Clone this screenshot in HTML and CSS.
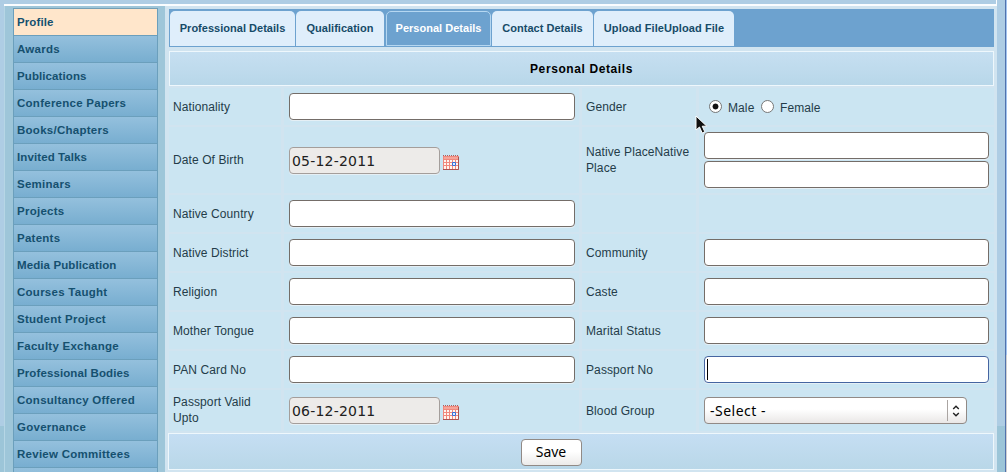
FILE: index.html
```
<!DOCTYPE html>
<html lang="en">
<head>
<meta charset="utf-8">
<title>Personal Details</title>
<link rel="stylesheet" href="styles.css">
</head>
<body>
<div class="page">
  <div class="topline"></div>
  <div class="layout">
    <nav class="sidebar">
      <a class="item tight current">Profile</a>
      <a class="item">Awards</a>
      <a class="item tight">Publications</a>
      <a class="item">Conference Papers</a>
      <a class="item">Books/Chapters</a>
      <a class="item tight">Invited Talks</a>
      <a class="item">Seminars</a>
      <a class="item">Projects</a>
      <a class="item">Patents</a>
      <a class="item tight">Media Publication</a>
      <a class="item">Courses Taught</a>
      <a class="item">Student Project</a>
      <a class="item">Faculty Exchange</a>
      <a class="item tight">Professional Bodies</a>
      <a class="item">Consultancy Offered</a>
      <a class="item">Governance</a>
      <a class="item">Review Committees</a>
      <a class="item"></a>
    </nav>
    <main class="content">
      <div class="tabs">
        <a class="tab tab-professional">Professional Details</a>
        <a class="tab tab-qualification">Qualification</a>
        <a class="tab tab-personal active">Personal Details</a>
        <a class="tab tab-contact">Contact Details</a>
        <a class="tab tab-upload">Upload FileUpload File</a>
      </div>
      <h1 class="title">Personal Details</h1>
      <form class="fields">
        <label class="cell label">Nationality</label>
        <div class="cell"><div class="field"></div></div>
        <label class="cell label">Gender</label>
        <div class="cell gender"><span class="radio checked"></span><span class="male">Male</span><span class="radio"></span><span class="female">Female</span></div>

        <label class="cell label">Date Of Birth</label>
        <div class="cell"><div class="field date">05-12-2011</div>
          <svg class="calendar" viewBox="0 0 16 16"><use href="#cal"/></svg></div>
        <label class="cell label"><span>Native PlaceNative<br>Place</span></label>
        <div class="cell stack"><div class="field narrow"></div><div class="field narrow"></div></div>

        <label class="cell label">Native Country</label>
        <div class="cell"><div class="field"></div></div>
        <div class="cell"></div>
        <div class="cell"></div>

        <label class="cell label">Native District</label>
        <div class="cell"><div class="field"></div></div>
        <label class="cell label">Community</label>
        <div class="cell"><div class="field narrow"></div></div>

        <label class="cell label">Religion</label>
        <div class="cell"><div class="field"></div></div>
        <label class="cell label">Caste</label>
        <div class="cell"><div class="field narrow"></div></div>

        <label class="cell label">Mother Tongue</label>
        <div class="cell"><div class="field"></div></div>
        <label class="cell label">Marital Status</label>
        <div class="cell"><div class="field narrow"></div></div>

        <label class="cell label">PAN Card No</label>
        <div class="cell"><div class="field"></div></div>
        <label class="cell label">Passport No</label>
        <div class="cell"><div class="field narrow focused"><span class="caret"></span></div></div>

        <label class="cell label upto"><span>Passport Valid<br>Upto</span></label>
        <div class="cell"><div class="field date">06-12-2011</div>
          <svg class="calendar" viewBox="0 0 16 16"><use href="#cal"/></svg></div>
        <label class="cell label">Blood Group</label>
        <div class="cell"><div class="select"><span class="value">-Select -</span><span class="arrows"><svg width="8" height="12" viewBox="0 0 8 12"><path d="M1.2 4L4 1.2 6.800 4M1.200 8L4 10.800 6.800 8" fill="none" stroke="#222" stroke-width="1.400"/></svg></span></div></div>
      </form>
      <div class="actions"><div class="save">Save</div></div>
    </main>
    <div class="gutter"></div>
    <div class="scrollbar"></div>
  </div>
</div>
<svg class="pointer" viewBox="0 0 13 20"><path d="M1 1v14l3.500-3 2.700 6 2.600-1.200-2.600-5.600h4.600z" fill="#111" stroke="#fff"/></svg>
<svg class="defs">
  <symbol id="cal" viewBox="0 0 16 16">
    <path d="M0 2h16v14H0z" fill="#f0887d"/>
    <path d="M0 1.500h16" stroke="#aa6260" stroke-width="1" stroke-dasharray="1 1"/>
    <path d="M1 3h14v2H1z" fill="#f5a59a"/>
    <path d="M1 6h2v2H1zM4 6h2v2H4zM7 6h2v2H7zM10 6h2v2h-2zM13 6h2v2h-2zM1 9h2v2H1zM4 9h2v2H4zM7 9h2v2H7zM10 9h2v2h-2zM13 9h2v2h-2zM1 12h2v3H1zM4 12h2v3H4zM7 12h2v3H7zM10 12h2v3h-2zM13 12h2v3h-2z" fill="#fff5ef"/>
    <path d="M9.500 8.500h3v3h-3z" fill="#dcecff" stroke="#356ed8"/>
    <path d="M15.500 3v12.500H0" fill="none" stroke="#ab5250"/>
  </symbol>
</svg>
</body>
</html>
```

FILE: styles.css
```
* { box-sizing: border-box; }

body {
  margin: 0;
  width: 1007px;
  height: 472px;
  overflow: hidden;
  font-family: "Liberation Sans", Arial, sans-serif;
  font-size: 12px;
  background: linear-gradient(#aecde4 426px, #9cc5d8 426px);
}

.page { height: 472px; overflow: hidden; }

.topline {
  height: 6px;
  margin-left: 4px;
  width: 993px;
  border-bottom: 2px solid #fafdff;
  border-right: 1px solid #fafdff;
}

.layout { display: flex; height: 466px; padding-left: 4px; }

.sidebar {
  width: 161px;
  padding: 2px 7px 0 8px;
  background: #9ec6d9;
  border-left: 1px solid #b6d6e5;
  overflow: hidden;
}

.item {
  display: block;
  width: 145px;
  height: 27px;
  padding: 1px 0 0 3px;
  border: 1px solid #6b9fbc;
  border-top: 0;
  background: linear-gradient(#94c0dd, #78aed0);
  color: #15506f;
  font-size: 11.5px;
  font-weight: bold;
  line-height: 24px;
  letter-spacing: 0.26px;
  white-space: nowrap;
}

.item.tight { letter-spacing: 0.1px; }

.item.current {
  height: 28px;
  border-top: 1px solid #739fb6;
  background: #ffe6cb;
}

.content {
  width: 832px;
  padding: 3px 3px 0 4px;
  background: #d1e4f0;
}

.gutter { flex: 1; }

.scrollbar {
  width: 2px;
  background: linear-gradient(#a2c4ef 355px, #cfcfcf 355px);
  border-left: 1px solid #5273ad;
  margin-top: -6px;
}

.tabs {
  display: flex;
  height: 38px;
  padding: 2px 0 1px 1px;
  gap: 1px;
  background: #6da2cf;
}

.tab {
  flex: none;
  height: 35px;
  border-radius: 5px 5px 0 0;
  background: #dfeefb;
  color: #164b68;
  font-size: 11px;
  font-weight: bold;
  line-height: 34px;
  text-align: center;
  letter-spacing: 0.02px;
  white-space: nowrap;
}

.tab-professional { width: 125px; }
.tab-qualification { width: 88px; }
.tab-personal { width: 105px; margin-left: 1px; }
.tab-contact { width: 101px; }
.tab-upload { width: 140px; letter-spacing: 0.08px; }

.tab.active {
  background: #6da2cf;
  border: 1px solid #b5d7f1;
  color: #fff;
  line-height: 32px;
}

.title {
  height: 35px;
  margin: 4px 0 2px;
  border: 1px solid #eef7fc;
  background: linear-gradient(#c6dff1, #b8d7e9);
  font-size: 12px;
  line-height: 34px;
  text-align: center;
  letter-spacing: 0.6px;
  color: #000;
}

.fields {
  display: grid;
  grid-template-columns: 112px 295px 114px 295px;
  grid-template-rows: 37px 66px repeat(5, 37px) 41px;
  gap: 2px 3px;
  height: 343px;
}

.cell {
  display: flex;
  align-items: center;
  padding-left: 5px;
  background: #cbe5f2;
}

.label {
  padding-left: 4px;
  color: #243c49;
  line-height: 16px;
  letter-spacing: 0.1px;
  white-space: nowrap;
}

.upto { padding-bottom: 2px; }

.field {
  width: 286px;
  height: 27px;
  border: 1px solid #746d68;
  border-radius: 4px;
  background: #fff;
  box-shadow: 0 1px 0 #e5eff5;
}

.narrow { width: 285px; }

.date {
  width: 151px;
  padding-left: 2px;
  border-color: #a49e9b;
  background: #edebe9;
  color: #202020;
  font: 14px/26px "DejaVu Sans", sans-serif;
  letter-spacing: 0.2px;
}

.calendar { width: 16px; height: 16px; margin: 3px 0 0 3px; }

.stack { flex-direction: column; align-items: flex-start; justify-content: center; gap: 2px; }

.gender { padding-left: 10px; color: #243c49; letter-spacing: 0.1px; }

.radio {
  width: 13px;
  height: 13px;
  margin-bottom: 1px;
  border: 1px solid #777;
  border-radius: 50%;
  background: #fff;
}

.radio.checked { background: radial-gradient(circle, #111 0 2.600px, #fff 3.300px); }

.male { width: 27px; margin: 3px 6px 0; }
.female { margin: 3px 0 0 6px; }

.focused { display: flex; align-items: center; padding-left: 2px; border-color: #4665a1; }
.caret { width: 1px; height: 21px; background: #000; }

.select {
  display: flex;
  align-items: center;
  width: 263px;
  height: 27px;
  padding-left: 5px;
  border: 1px solid #918a86;
  border-radius: 4px;
  background: linear-gradient(#fff 45%, #e9e7e6);
}

.value { flex: 1; font: 14px/24px "Noto Sans", sans-serif; letter-spacing: 0.5px; }

.arrows {
  display: flex;
  align-items: center;
  justify-content: center;
  width: 19px;
  height: 21px;
  padding-right: 2px;
  border-left: 1px solid #aaa5a2;
}

.actions {
  display: flex;
  justify-content: center;
  height: 37px;
  margin: 2px 0 0 -1px;
  padding: 5px 0 0 0;
  border: 1px solid #eef7fc;
  background: linear-gradient(#c5def3, #b9d7e8);
}

.save {
  width: 61px;
  height: 27px;
  margin-right: 60px;
  border: 1px solid #918a86;
  border-radius: 4px;
  background: linear-gradient(#fff 45%, #ecebea);
  font: 14px/24px "Noto Sans", sans-serif;
  text-align: center;
}

.pointer { position: absolute; left: 695px; top: 115px; width: 13px; height: 20px; }
.defs { position: absolute; width: 0; height: 0; }
```
